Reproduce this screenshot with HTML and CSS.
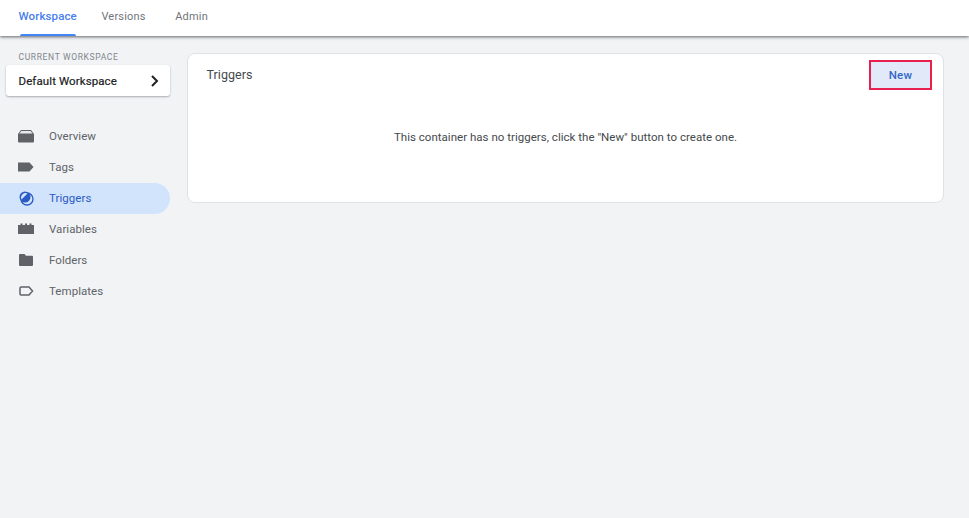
FILE: index.html
```html
<!DOCTYPE html>
<html lang="en">
<head>
<meta charset="utf-8">
<title>Triggers</title>
<link rel="stylesheet" href="styles.css">
</head>
<body>
<header class="topbar">
  <nav class="tabs">
    <a class="tab tab-active">Workspace</a>
    <a class="tab">Versions</a>
    <a class="tab">Admin</a>
  </nav>
</header>
<div class="main">
  <aside class="sidebar">
    <div class="ws-label">CURRENT WORKSPACE</div>
    <div class="ws-card">
      <span>Default Workspace</span>
      <svg class="chev" width="10" height="12" viewBox="0 0 10 12"><path d="M2 1l5 5-5 5" fill="none" stroke="#202124" stroke-width="2"/></svg>
    </div>
    <ul class="menu">
      <li class="item">
        <svg class="ico" width="16" height="14" viewBox="0 0 16 14"><path d="M3 1h10l3 4v7.500a1 1 0 0 1-1 1H1a1 1 0 0 1-1-1V5z" fill="#5f6368"/><path d="M3.400 2h9.200l2 2.600H1.400z" fill="#e8e9ec"/></svg>
        <span>Overview</span>
      </li>
      <li class="item">
        <svg class="ico" width="16" height="14" viewBox="0 0 16 14"><path d="M0 2.500h11.500L15.500 7l-4 4.500H0z" fill="#5f6368"/></svg>
        <span>Tags</span>
      </li>
      <li class="item item-active">
        <svg class="ico" width="16" height="16" viewBox="0 0 16 16"><circle cx="9" cy="9" r="6" fill="none" stroke="#2a5bc4" stroke-width="1.300"/><circle cx="7" cy="7" r="5.500" fill="#2a5bc4"/><path d="M3.500 9.500A4.500 4.500 0 0 1 9.500 3.500z" fill="#d2e3fc"/></svg>
        <span>Triggers</span>
      </li>
      <li class="item">
        <svg class="ico" width="16" height="14" viewBox="0 0 16 14"><path d="M0 3h2.500V1.500h2V3H7V1.500h2V3h2.500V1.500h2V3H16v9H0z" fill="#5f6368"/></svg>
        <span>Variables</span>
      </li>
      <li class="item">
        <svg class="ico" width="16" height="14" viewBox="0 0 16 14"><path d="M2 1h4.500L8 2.700h6a1 1 0 0 1 1 1V12a1 1 0 0 1-1 1H2a1 1 0 0 1-1-1V2a1 1 0 0 1 1-1z" fill="#5f6368"/></svg>
        <span>Folders</span>
      </li>
      <li class="item">
        <svg class="ico" width="16" height="14" viewBox="0 0 16 14"><path d="M3 3h8L14.500 7 11 11H3a1 1 0 0 1-1-1V4a1 1 0 0 1 1-1z" fill="none" stroke="#5f6368" stroke-width="1.500"/></svg>
        <span>Templates</span>
      </li>
    </ul>
  </aside>
  <section class="card">
    <div class="card-head">
      <h2 class="card-title">Triggers</h2>
      <button class="new-btn">New</button>
    </div>
    <p class="empty">This container has no triggers, click the "New" button to create one.</p>
  </section>
</div>
</body>
</html>
```
FILE: styles.css
```css
* { box-sizing: border-box; }
html, body { margin: 0; height: 100%; }
body {
  background: #f1f3f5;
  font-family: Roboto, "Liberation Sans", sans-serif;
  color: #3c4043;
  overflow: hidden;
}
.topbar {
  height: 36px;
  background: #fff;
  box-shadow: 0 1px 3px rgba(60,64,67,.8);
  position: relative;
}
.tabs { display: flex; height: 36px; padding-left: 18.500px; gap: 29.500px; }
.tab {
  font-size: 11px;
  font-weight: 400;
  letter-spacing: .2px;
  line-height: 33px;
  color: #70757a;
  height: 36px;
  position: relative;
}
.tab-active { color: #4a80ec; font-size: 11.500px; font-weight: 500; letter-spacing: .12px; margin-right: -5px; }
.tab-active::after {
  content: "";
  position: absolute;
  left: 1px; right: 1px; bottom: 0;
  height: 2.500px;
  background: #4285f4;
  border-radius: 2px 2px 0 0;
}
.main { display: flex; align-items: flex-start; padding-top: 17px; }
.sidebar { width: 170px; flex: none; margin-right: 17px; }
.ws-label {
  font-size: 8.500px;
  font-weight: 400;
  letter-spacing: .65px;
  color: #80868b;
  line-height: 10px;
  padding-left: 18.500px;
  margin-top: -1px;
}
.ws-card {
  margin: 3px 0 0 6px;
  height: 31px;
  background: #fff;
  border-radius: 3px;
  box-shadow: 0 1px 2px rgba(60,64,67,.4);
  display: flex;
  align-items: center;
  justify-content: space-between;
  padding: 0 10px 0 12.500px;
  font-size: 11.500px;
  font-weight: 400;
  letter-spacing: .1px;
  color: #202124;
  -webkit-text-stroke: .2px #202124;
}
.menu { list-style: none; margin: 25px 0 0; padding: 0; }
.item {
  height: 31px;
  display: flex;
  align-items: center;
  padding: 0 0 1px 18px;
  gap: 15px;
  font-size: 11.500px;
  font-weight: 400;
  letter-spacing: .05px;
  color: #5f6368;
  border-radius: 0 16px 16px 0;
}
.ico { width: 16px; flex: none; }
.item-active { background: #d2e3fc; color: #2a5bc4; }
.card {
  flex: 1;
  margin-right: 25px;
  height: 150px;
  background: #fff;
  border: 1px solid #dfe1e6;
  border-radius: 8px;
}
.card-head {
  display: flex;
  justify-content: space-between;
  align-items: flex-start;
  padding: 6px 11px 0 18.500px;
}
.card-title {
  margin: 7px 0 0;
  font-size: 12.500px;
  font-weight: 400;
  letter-spacing: .05px;
  color: #45494d;
}
.new-btn {
  width: 63px;
  height: 30px;
  background: #e2eafa;
  border: 2px solid #e8204f;
  font: 500 11.500px Roboto, "Liberation Sans", sans-serif;
  letter-spacing: .2px;
  color: #3367c9;
  padding: 0;
}
.empty {
  margin: 40px 0 0;
  text-align: center;
  font-size: 11.500px;
  letter-spacing: .02px;
  color: #45494d;
}
```
